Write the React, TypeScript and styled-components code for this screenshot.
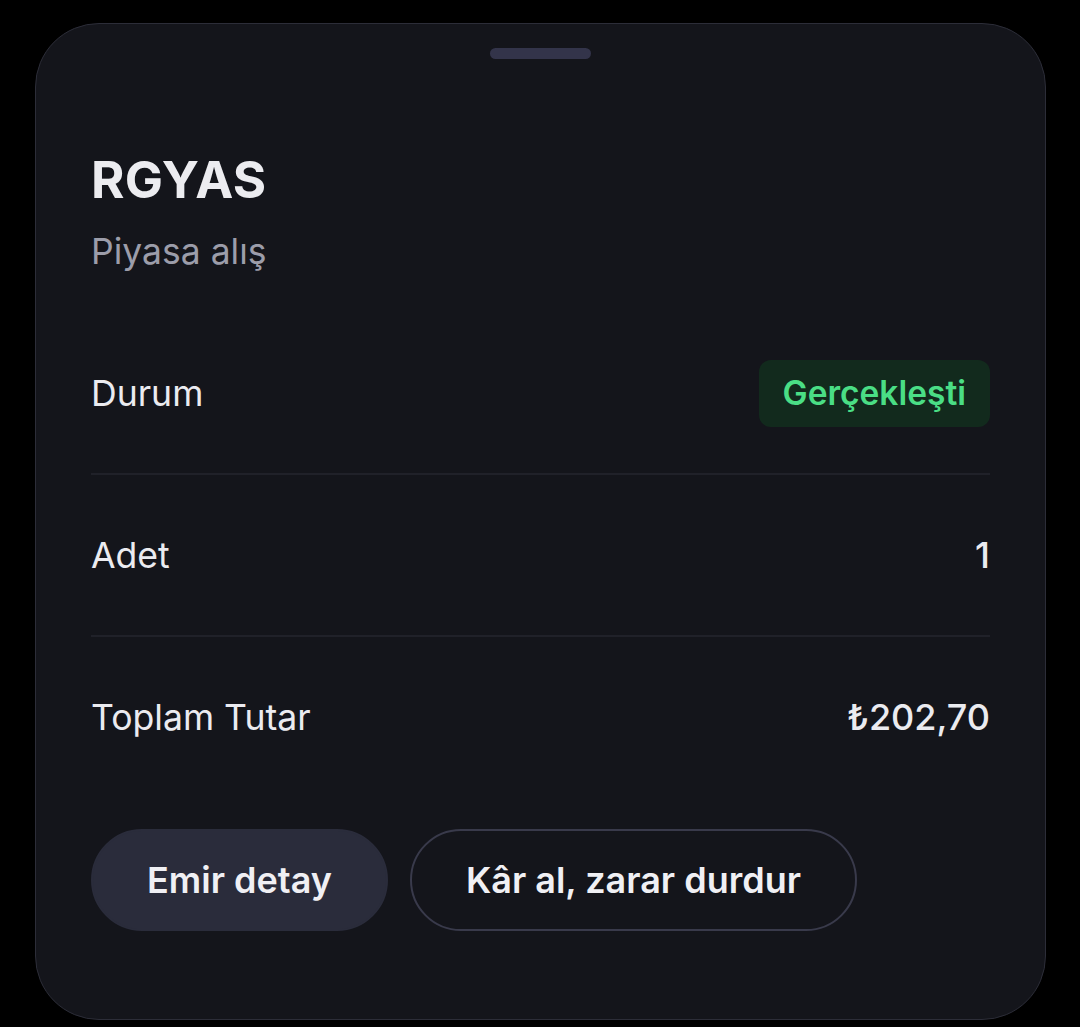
import React from 'react';
import styled, { createGlobalStyle } from 'styled-components';

const GlobalStyle = createGlobalStyle`
    html, body {
        margin: 0;
        padding: 0;
        background: #000000;
    }
    body {
        font-family: Inter, "Noto Sans", sans-serif;
        -webkit-font-smoothing: antialiased;
    }
`;

const Page = styled.div`
    width: 1080px;
    height: 1027px;
    padding: 23px 34px 0 35px;
    box-sizing: border-box;
`;

const Sheet = styled.div`
    height: 997px;
    box-sizing: border-box;
    background: #14151b;
    border: 1.5px solid #2c2d38;
    border-radius: 64px;
    padding: 24px 55px 0 55px;
    display: flex;
    flex-direction: column;
`;

const Handle = styled.div`
    align-self: center;
    width: 101px;
    height: 11px;
    border-radius: 6px;
    background: #33344a;
`;

const Title = styled.h1`
    margin: 92px 0 0;
    font-size: 51px;
    line-height: 58px;
    font-weight: 700;
    color: #ececf0;
    letter-spacing: 0.2px;
`;

const Subtitle = styled.div`
    margin-top: 22px;
    font-size: 35.5px;
    line-height: 42px;
    color: #9c9daa;
`;

const List = styled.div`
    margin-top: 40px;
    display: flex;
    flex-direction: column;
`;

const Row = styled.div<{ last?: boolean }>`
    height: 160px;
    display: flex;
    align-items: center;
    justify-content: space-between;
    border-bottom: ${(p) => (p.last ? 'none' : '2px solid #202129')};
`;

const Label = styled.span`
    font-size: 35.6px;
    color: #ebebf0;
`;

const Value = styled.span`
    font-size: 36px;
    color: #ebebf0;
    font-weight: 500;
`;

const Badge = styled.span`
    height: 67px;
    padding: 0 24px;
    display: inline-flex;
    align-items: center;
    border-radius: 12px;
    background: #122a1d;
    color: #4ade85;
    font-size: 33.5px;
    font-weight: 600;
`;

const Actions = styled.div`
    margin-top: 32px;
    display: flex;
    gap: 22px;
`;

const Button = styled.button<{ outlined?: boolean }>`
    height: 102px;
    padding: 0 54px;
    border-radius: 51px;
    font-family: inherit;
    font-size: 36px;
    font-weight: 600;
    color: #f0f0f4;
    background: ${(p) => (p.outlined ? 'transparent' : '#2a2c3b')};
    border: 2px solid ${(p) => (p.outlined ? '#393a4b' : '#2a2c3b')};
    cursor: pointer;
`;

const App: React.FC = () => {
    return (
        <>
            <GlobalStyle />
            <Page>
                <Sheet>
                    <Handle />
                    <Title>RGYAS</Title>
                    <Subtitle>Piyasa alış</Subtitle>
                    <List>
                        <Row>
                            <Label>Durum</Label>
                            <Badge>Gerçekleşti</Badge>
                        </Row>
                        <Row>
                            <Label>Adet</Label>
                            <Value>1</Value>
                        </Row>
                        <Row last>
                            <Label>Toplam Tutar</Label>
                            <Value>₺202,70</Value>
                        </Row>
                    </List>
                    <Actions>
                        <Button>Emir detay</Button>
                        <Button outlined>Kâr al, zarar durdur</Button>
                    </Actions>
                </Sheet>
            </Page>
        </>
    );
};

export default App;
